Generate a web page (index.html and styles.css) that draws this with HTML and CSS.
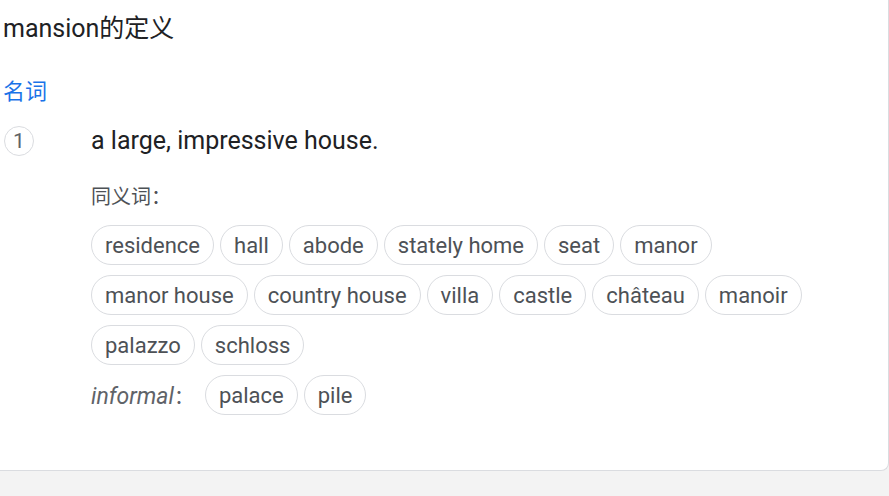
FILE: index.html
```html
<!DOCTYPE html>
<html lang="zh-CN">
<head>
<meta charset="utf-8">
<title>mansion的定义</title>
<link rel="stylesheet" href="styles.css">
</head>
<body>
<div class="card">
  <h1 class="title">mansion的定义</h1>
  <div class="pos">名词</div>
  <div class="sense">
    <div class="num">1</div>
    <div class="body">
      <div class="def">a large, impressive house.</div>
      <div class="syn-label">同义词：</div>
      <div class="chips">
        <span class="chip">residence</span>
        <span class="chip">hall</span>
        <span class="chip">abode</span>
        <span class="chip">stately home</span>
        <span class="chip">seat</span>
        <span class="chip">manor</span>
      </div>
      <div class="chips">
        <span class="chip">manor house</span>
        <span class="chip">country house</span>
        <span class="chip">villa</span>
        <span class="chip">castle</span>
        <span class="chip">château</span>
        <span class="chip">manoir</span>
      </div>
      <div class="chips">
        <span class="chip">palazzo</span>
        <span class="chip">schloss</span>
      </div>
      <div class="chips">
        <span class="reg">informal<span class="colon">：</span></span>
        <span class="chip">palace</span>
        <span class="chip">pile</span>
      </div>
    </div>
  </div>
</div>
</body>
</html>
```
FILE: styles.css
```css
html, body {
  margin: 0;
  padding: 0;
  background: #f3f3f3;
  font-family: Roboto, "Noto Sans CJK SC", Arial, sans-serif;
}
.card {
  background: #fff;
  border: 1px solid #dadce0;
  border-top: none;
  border-left: none;
  border-radius: 0 0 8px 0;
  width: 889px;
  box-sizing: border-box;
  padding: 13px 0 55px 3px;
}
.title {
  margin: 0;
  font-size: 25px;
  line-height: 32px;
  font-weight: 400;
  color: #202124;
}
.pos {
  margin-top: 33px;
  font-size: 22px;
  line-height: 28px;
  color: #1a73e8;
}
.sense {
  display: flex;
  margin-top: 20px;
}
.num {
  width: 30px;
  height: 30px;
  box-sizing: border-box;
  border: 1px solid #dadce0;
  border-radius: 50%;
  display: flex;
  align-items: center;
  justify-content: center;
  font-size: 21px;
  color: #5f6368;
  margin-left: 1px;
  flex: none;
}
.body {
  margin-left: 57px;
}
.def {
  font-size: 25px;
  line-height: 30px;
  color: #202124;
}
.syn-label {
  margin-top: 28px;
  font-size: 20px;
  line-height: 26px;
  color: #4d5156;
}
.chips {
  display: flex;
  align-items: center;
  gap: 6px;
  margin-top: 10px;
}
.syn-label + .chips {
  margin-top: 15px;
}
.chip {
  height: 40px;
  box-sizing: border-box;
  border: 1px solid #dadce0;
  border-radius: 20px;
  padding: 0 13px;
  display: flex;
  align-items: center;
  font-size: 22px;
  color: #4d5156;
}
.reg {
  font-style: italic;
  font-size: 23px;
  color: #5f6368;
  margin-right: 5px;
}
.colon {
  font-style: normal;
  font-size: 20px;
}
```
